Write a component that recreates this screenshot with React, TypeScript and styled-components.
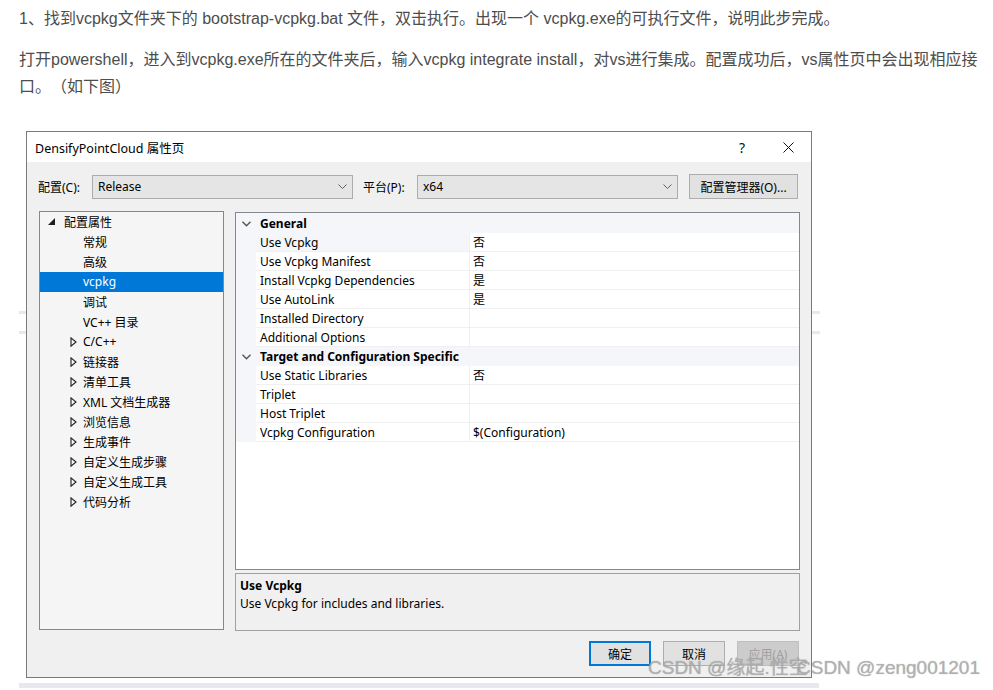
import React from "react";
import styled, { createGlobalStyle } from "styled-components";

const Global = createGlobalStyle`
  html, body { margin: 0; padding: 0; background: #fff; }
  body { font-family: "Liberation Sans", "Noto Sans CJK SC", sans-serif; text-spacing-trim: space-all; }
`;

const Page = styled.div`
  padding: 5px 0 0 19px;
  width: 974px;
`;

const Para = styled.p`
  margin: 0 0 14px;
  font-size: 16px;
  line-height: 27px;
  color: #4d4d4d;
  font-family: "Liberation Sans", "Noto Sans CJK SC", sans-serif;
  text-spacing-trim: space-all;
`;

const Figure = styled.div`
  position: relative;
  margin-top: 31px;
  width: 801px;
  background:
    linear-gradient(#e8e8ee, #e8e8ee) 0 180px / 100% 3px no-repeat,
    linear-gradient(#e8e8ee, #e8e8ee) 0 200px / 100% 3px no-repeat;
`;

const BottomBar = styled.div`
  margin-top: 5px;
  height: 5px;
  width: 800px;
  background: #e8e8ee;
`;

const Dialog = styled.div`
  margin-left: 7px;
  width: 784px;
  border: 1px solid #7a7a7a;
  background: #f0f0f0;
  font-family: "Noto Sans", "Noto Sans CJK SC", sans-serif;
  font-size: 12px;
  color: #000;
`;

const TitleBar = styled.div`
  height: 30px;
  background: #fff;
  display: flex;
  align-items: center;
`;

const TitleText = styled.div`
  flex: 1;
  padding-left: 8px;
  font-size: 12.5px;
  color: #000;
`;

const TitleButton = styled.div`
  width: 46px;
  height: 30px;
  display: flex;
  align-items: center;
  justify-content: center;
  font-size: 14px;
  color: #111;
`;

const Body = styled.div`
  padding: 12px 0 11px;
`;

const ConfigRow = styled.div`
  display: grid;
  grid-template-columns: 54px 261px 10px 54px 261px 11px 109px;
  align-items: center;
  height: 24px;
  padding-left: 11px;
`;

const Label = styled.div`
  white-space: nowrap;
`;

const Combo = styled.div`
  height: 24px;
  box-sizing: border-box;
  border: 1px solid #acacac;
  background: #e5e5e5;
  display: flex;
  align-items: center;
  justify-content: space-between;
  padding: 0 5px 0 5px;
`;

const Button = styled.div<{ $primary?: boolean; $disabled?: boolean }>`
  height: 25px;
  box-sizing: border-box;
  border: ${(p) => (p.$primary ? "2px solid #0078d7" : p.$disabled ? "1px solid #bfbfbf" : "1px solid #adadad")};
  background: ${(p) => (p.$disabled ? "#cccccc" : "#e1e1e1")};
  color: ${(p) => (p.$disabled ? "#a0a0a0" : "#000")};
  display: flex;
  align-items: center;
  justify-content: center;
  white-space: nowrap;
`;

const Main = styled.div`
  margin-top: 13px;
  display: grid;
  grid-template-columns: 185px 565px;
  column-gap: 11px;
  padding-left: 12px;
`;

const Tree = styled.div`
  height: 419px;
  box-sizing: border-box;
  border: 1px solid #828790;
  background: #f5f5f5;
`;

const TreeRow = styled.div<{ $level: number; $selected?: boolean }>`
  height: 20px;
  box-sizing: border-box;
  padding-bottom: 1px;
  display: flex;
  align-items: center;
  padding-left: ${(p) => 8 + p.$level * 19}px;
  background: ${(p) => (p.$selected ? "#0078d7" : "transparent")};
  color: ${(p) => (p.$selected ? "#fff" : "#000")};
  white-space: nowrap;
`;

const Expander = styled.span`
  width: 16px;
  height: 19px;
  display: flex;
  align-items: center;
  flex: none;
`;

const RightCol = styled.div`
  padding-top: 1px;
  display: flex;
  flex-direction: column;
  gap: 3px;
`;

const Grid = styled.div`
  height: 358px;
  box-sizing: border-box;
  border: 1px solid #828790;
  background: #fff;
  padding-top: 1px;
  background-image: linear-gradient(#f4f6f9, #f4f6f9);
  background-size: 100% 1px;
  background-repeat: no-repeat;
`;

const CatRow = styled.div`
  height: 19px;
  display: flex;
  align-items: center;
  background: #f4f6f9;
  font-weight: 700;
`;

const Gutter = styled.div`
  width: 20px;
  height: 100%;
  flex: none;
  display: flex;
  align-items: center;
  justify-content: center;
  background: #f4f6f9;
`;

const PropRow = styled.div`
  height: 19px;
  display: flex;
  align-items: stretch;
`;

const NameCell = styled.div<{ $selected?: boolean }>`
  width: 214px;
  flex: none;
  box-sizing: border-box;
  padding-left: 4px;
  display: flex;
  align-items: center;
  border-right: 1px solid #f0f0f0;
  border-bottom: 1px solid #f0f0f0;
  background: ${(p) => (p.$selected ? "#f4f6f9" : "#fff")};
  white-space: nowrap;
  overflow: hidden;
`;

const ValueCell = styled.div`
  flex: 1;
  box-sizing: border-box;
  padding-left: 3px;
  display: flex;
  align-items: center;
  border-bottom: 1px solid #f0f0f0;
  white-space: nowrap;
`;

const Desc = styled.div`
  height: 58px;
  box-sizing: border-box;
  border: 1px solid #a0a0a0;
  background: #f0f0f0;
  padding: 3px 4px;
  line-height: 18px;
`;

const DescTitle = styled.div`
  font-weight: 700;
`;

const ButtonRow = styled.div`
  margin-top: 10px;
  display: flex;
  justify-content: flex-end;
  gap: 12px;
  padding-right: 12px;
  & > * { width: 62px; }
`;

const Watermark = styled.div<{ $left: number }>`
  position: absolute;
  left: ${(p) => p.$left}px;
  top: 525px;
  font-family: "Liberation Sans", "Noto Sans CJK SC", sans-serif;
  font-size: 19px;
  line-height: 24px;
  color: rgba(175, 175, 175, 0.85);
  text-shadow: 0 0 1px rgba(120, 120, 120, 0.6);
  white-space: nowrap;
  pointer-events: none;
`;

const ChevronDown = ({ color = "#606060" }: { color?: string }) => (
  <svg width="9" height="5" viewBox="0 0 9 5">
    <path d="M0.5 0.5 L4.5 4.5 L8.5 0.5" fill="none" stroke={color} strokeWidth="1" />
  </svg>
);

const CatChevron = () => (
  <svg width="9" height="6" viewBox="0 0 9 6">
    <path d="M0.5 0.8 L4.5 4.8 L8.5 0.8" fill="none" stroke="#555" strokeWidth="1.4" />
  </svg>
);

const ExpandedArrow = () => (
  <svg width="7" height="7" viewBox="0 0 7 7">
    <polygon points="7,0 7,7 0,7" fill="#1e1e1e" />
  </svg>
);

const CollapsedArrow = () => (
  <svg width="9" height="10" viewBox="0 0 9 10" style={{ marginLeft: 3 }}>
    <polygon points="1,0.8 6,5 1,9.2" fill="none" stroke="#1e1e1e" strokeWidth="1.1" />
  </svg>
);

const CloseIcon = () => (
  <svg width="11" height="11" viewBox="0 0 11 11">
    <path d="M0.5 0.5 L10.5 10.5 M10.5 0.5 L0.5 10.5" stroke="#111" strokeWidth="1" />
  </svg>
);

type TreeItem = { label: string; level: number; arrow?: "open" | "closed"; selected?: boolean };

const treeItems: TreeItem[] = [
  { label: "配置属性", level: 0, arrow: "open" },
  { label: "常规", level: 1 },
  { label: "高级", level: 1 },
  { label: "vcpkg", level: 1, selected: true },
  { label: "调试", level: 1 },
  { label: "VC++ 目录", level: 1 },
  { label: "C/C++", level: 1, arrow: "closed" },
  { label: "链接器", level: 1, arrow: "closed" },
  { label: "清单工具", level: 1, arrow: "closed" },
  { label: "XML 文档生成器", level: 1, arrow: "closed" },
  { label: "浏览信息", level: 1, arrow: "closed" },
  { label: "生成事件", level: 1, arrow: "closed" },
  { label: "自定义生成步骤", level: 1, arrow: "closed" },
  { label: "自定义生成工具", level: 1, arrow: "closed" },
  { label: "代码分析", level: 1, arrow: "closed" },
];

type Section = { title: string; rows: { name: string; value: string; selected?: boolean }[] };

const sections: Section[] = [
  {
    title: "General",
    rows: [
      { name: "Use Vcpkg", value: "否", selected: true },
      { name: "Use Vcpkg Manifest", value: "否" },
      { name: "Install Vcpkg Dependencies", value: "是" },
      { name: "Use AutoLink", value: "是" },
      { name: "Installed Directory", value: "" },
      { name: "Additional Options", value: "" },
    ],
  },
  {
    title: "Target and Configuration Specific",
    rows: [
      { name: "Use Static Libraries", value: "否" },
      { name: "Triplet", value: "" },
      { name: "Host Triplet", value: "" },
      { name: "Vcpkg Configuration", value: "$(Configuration)" },
    ],
  },
];

export default function App() {
  return (
    <>
      <Global />
      <Page>
        <Para>1、找到vcpkg文件夹下的 bootstrap-vcpkg.bat 文件，双击执行。出现一个 vcpkg.exe的可执行文件，说明此步完成。</Para>
        <Para>
          打开powershell，进入到vcpkg.exe所在的文件夹后，输入vcpkg integrate install，对vs进行集成。配置成功后，vs属性页中会出现相应接口。（如下图）
        </Para>
        <Figure>
          <Dialog>
            <TitleBar>
              <TitleText>DensifyPointCloud 属性页</TitleText>
              <TitleButton>?</TitleButton>
              <TitleButton>
                <CloseIcon />
              </TitleButton>
            </TitleBar>
            <Body>
              <ConfigRow>
                <Label>配置(C):</Label>
                <Combo>
                  <span>Release</span>
                  <ChevronDown />
                </Combo>
                <span />
                <Label>平台(P):</Label>
                <Combo>
                  <span>x64</span>
                  <ChevronDown />
                </Combo>
                <span />
                <Button>配置管理器(O)...</Button>
              </ConfigRow>
              <Main>
                <Tree>
                  {treeItems.map((it) => (
                    <TreeRow key={it.label} $level={it.level} $selected={it.selected}>
                      <Expander>
                        {it.arrow === "open" && <ExpandedArrow />}
                        {it.arrow === "closed" && <CollapsedArrow />}
                      </Expander>
                      {it.label}
                    </TreeRow>
                  ))}
                </Tree>
                <RightCol>
                  <Grid>
                    {sections.map((s) => (
                      <React.Fragment key={s.title}>
                        <CatRow>
                          <Gutter>
                            <CatChevron />
                          </Gutter>
                          <span style={{ paddingLeft: 4 }}>{s.title}</span>
                        </CatRow>
                        {s.rows.map((r) => (
                          <PropRow key={r.name}>
                            <Gutter />
                            <NameCell $selected={r.selected}>{r.name}</NameCell>
                            <ValueCell>{r.value}</ValueCell>
                          </PropRow>
                        ))}
                      </React.Fragment>
                    ))}
                  </Grid>
                  <Desc>
                    <DescTitle>Use Vcpkg</DescTitle>
                    <div>Use Vcpkg for includes and libraries.</div>
                  </Desc>
                </RightCol>
              </Main>
              <ButtonRow>
                <Button $primary>确定</Button>
                <Button>取消</Button>
                <Button $disabled>应用(A)</Button>
              </ButtonRow>
            </Body>
          </Dialog>
          <BottomBar />
          <Watermark $left={629}>CSDN @缘起.性空</Watermark>
          <Watermark $left={778}>CSDN @zeng001201</Watermark>
        </Figure>
      </Page>
    </>
  );
}
